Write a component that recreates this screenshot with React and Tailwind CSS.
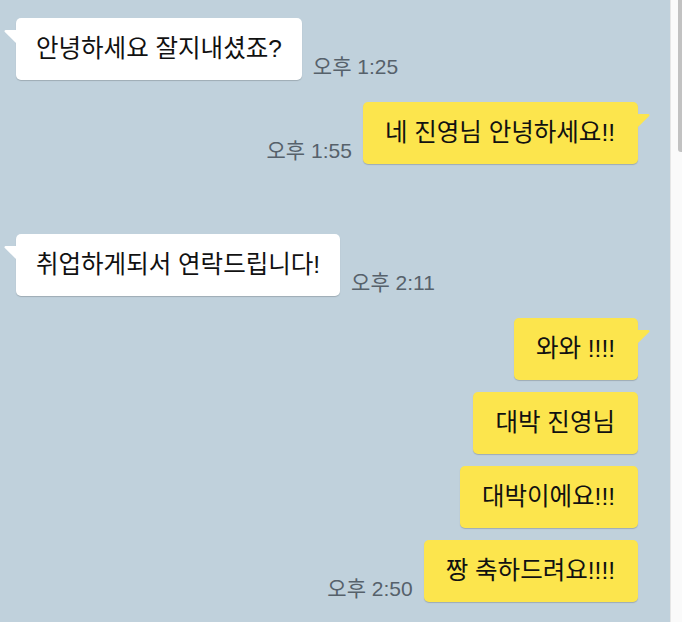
import React from 'react';

const messages = [
  { id: 1, side: 'left', lines: ['안녕하세요 잘지내셨죠?'], time: '오후 1:25', gap: 'mt-[18px]' },
  { id: 2, side: 'right', lines: ['네 진영님 안녕하세요!!'], time: '오후 1:55', gap: 'mt-[22px]' },
  { id: 3, side: 'left', lines: ['취업하게되서 연락드립니다!'], time: '오후 2:11', gap: 'mt-[70px]' },
  { id: 4, side: 'right', lines: ['와와 !!!!', '대박 진영님', '대박이에요!!!', '짱 축하드려요!!!!'], time: '오후 2:50', gap: 'mt-[22px]' },
];

function Tail({ side, color }) {
  if (side === 'left') {
    return (
      <svg className="absolute left-[-12px] top-[12px]" width="13" height="14" viewBox="0 0 13 14">
        <path d="M1.5 0 H13 V14 L0.6 1.8 Q0 0.6 1.5 0 Z" fill={color} />
      </svg>
    );
  }
  return (
    <svg className="absolute right-[-12px] top-[12px]" width="13" height="14" viewBox="0 0 13 14">
      <path d="M0 0 H11.5 Q13 0.6 12.4 1.8 L0 14 Z" fill={color} />
    </svg>
  );
}

function Bubble({ side, text, tail }) {
  const yellow = side === 'right';
  return (
    <div
      className={
        'relative rounded-[5px] py-[18px] text-[24.5px] leading-[26px] text-[#111] shadow-[0_1px_1px_rgba(0,0,0,0.18)] ' +
        (yellow ? 'bg-[#fce54d] pl-[22px] pr-[23px]' : 'bg-white px-[20px]')
      }
    >
      {tail && <Tail side={side} color={yellow ? '#fce54d' : '#ffffff'} />}
      {text}
    </div>
  );
}

function Group({ side, lines, time, gap }) {
  const isLeft = side === 'left';
  return (
    <div className={'flex flex-col gap-[12px] ' + gap + (isLeft ? ' items-start' : ' items-end')}>
      {lines.map((line, i) => {
        const last = i === lines.length - 1;
        return (
          <div key={i} className={'flex items-end gap-[11px]' + (isLeft ? '' : ' flex-row-reverse')}>
            <Bubble side={side} text={line} tail={i === 0} />
            {last && (
              <span className="mb-[2px] text-[21px] leading-[22px] text-[#56616b]">{time}</span>
            )}
          </div>
        );
      })}
    </div>
  );
}

export default function App() {
  return (
    <div className="flex h-[622px] w-[682px] overflow-hidden bg-[#c0d1dc] font-['Liberation_Sans','Noto_Sans_CJK_KR',sans-serif]">
      <div className="flex-1 pl-[16px] pr-[32px]">
        {messages.map((m) => (
          <Group key={m.id} {...m} />
        ))}
      </div>
      <div className="flex w-[12px] justify-end border-l border-[#e6e6e6] bg-[#fafafa]">
        <div className="h-[152px] w-[4px] rounded-bl-[3px] bg-[#c2c2c2]" />
      </div>
    </div>
  );
}
